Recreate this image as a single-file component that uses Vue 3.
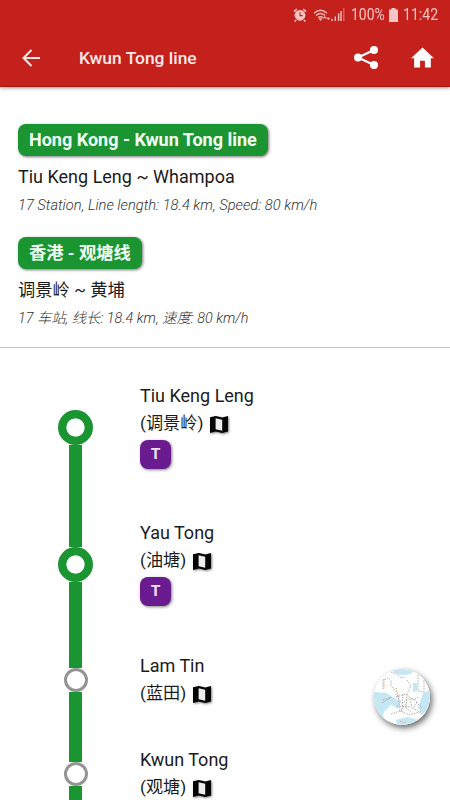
<template>
  <div class="screen">
    <header class="header">
      <div class="status">
        <svg class="alarm" viewBox="0 0 14 14">
          <circle cx="7" cy="7.3" r="5.4" fill="#f5c5c3" />
          <path d="M1 3.6 3.8 1.2M10.2 1.2 13 3.6M3 12l-1.3 1.5M11 12l1.3 1.5" stroke="#f5c5c3" stroke-width="1.6" />
          <path d="M7 4.2v3.4h2.7" fill="none" stroke="#c4211c" stroke-width="1.1" />
        </svg>
        <svg class="wifi" viewBox="0 0 18 14">
          <g fill="none" stroke="#f0b5b2" stroke-width="1.4">
            <path d="M1 5.2Q7.5-.8 14 5.2M3 7.6Q7.5 3.4 12 7.6M5 9.9q2.5-2.2 5 0" />
          </g>
          <path d="m5.5 10.8 2 2.2 2-2.2q-2-1.3-4 0z" fill="#f0b5b2" />
          <path d="m11.8 8 2 2.3H9.8zM15.3 12l2-2.3h-4z" fill="#f5c5c3" />
        </svg>
        <svg class="signal" viewBox="0 0 14 13">
          <path d="M1 11v2M4.3 8.5V13M7.6 5.5V13M10 3V13" stroke="#f5c5c3" stroke-width="1.4" />
          <path d="M12.8 0v13" stroke="#dc6b66" stroke-width="1.3" />
        </svg>
        <span class="percent">100%</span>
        <svg class="battery" viewBox="0 0 9 14">
          <path d="M2.5 0h4v1.6H9V14H0V1.6h2.5z" fill="#f5c5c3" />
        </svg>
        <span class="clock">11:42</span>
      </div>
      <div class="toolbar">
        <svg class="back" viewBox="0 0 18 18">
          <path d="M18 9H1.5M9.5 1 1.5 9l8 8" fill="none" stroke="#fbe9e8" stroke-width="2" />
        </svg>
        <h1>Kwun Tong line</h1>
        <svg class="share" viewBox="0 0 24 23">
          <path d="M20 4 4 11.5 20 19" fill="none" stroke="#fff" stroke-width="2.2" />
          <g fill="#fff">
            <circle cx="20" cy="4" r="4" />
            <circle cx="4" cy="11.5" r="4" />
            <circle cx="20" cy="19" r="4" />
          </g>
        </svg>
        <svg class="home" viewBox="0 0 24 21">
          <path d="M12 0 0 11.2h3.3V21h6.2v-7.2h5V21h6.2v-9.8H24z" fill="#fff" />
        </svg>
      </div>
    </header>

    <section class="summary">
      <div v-for="info in infos" :key="info.title" class="info" :class="info.lang">
        <div class="line-name">{{ info.title }}</div>
        <p class="route">{{ info.route }}</p>
        <p class="detail">{{ info.detail }}</p>
      </div>
    </section>

    <main class="stations">
      <div
        v-for="station in stations"
        :key="station.name"
        class="station"
        :class="{ transfer: station.transfer }"
      >
        <div class="track">
          <div class="segment before"></div>
          <div class="node"></div>
          <div class="segment after"></div>
        </div>
        <div class="label">
          <div class="name">{{ station.name }}</div>
          <div class="local">
            <span>({{ station.local }})</span>
            <svg class="map" viewBox="0 0 18 17">
              <path d="M0 1.2 5.8 0l6.4 1.4L18 0v15.6L12.2 17l-6.4-1.4L0 17z" fill="#050505" />
              <path d="m5.6 2.2 6.6 1.5v11L5.6 13.2z" fill="#ededed" />
            </svg>
          </div>
          <div v-if="station.transfer" class="badge">T</div>
        </div>
      </div>
    </main>

    <div class="map-button">
      <svg viewBox="0 0 56 56">
        <rect width="56" height="56" fill="#fdfefe" />
        <path d="M0 23 13 24l8 7-11 12-2 9H0zM18 2q10 7 20 2l3-6H18zM21 30l6 2-3 8-8-5zM49 24l7-3v18l-7 6-5-6zM22 51l11-3 12 3-6 5H23zM39 14l4 0 0 8-4 1z" fill="#c5e6f3" />
        <g fill="none" stroke="#a39a9b" stroke-width="0.8" stroke-dasharray="1.5 1.2">
          <path d="M17 3l6 2 4 4 4-1M9 20v-9l5-2 3 3v6M18 18l6 7 2 17M33 11l4 6-4 8M44 6v16l6 1V11M29 25l-1 17M33 25l-1 14 6 5M38 29l5 4-4 7 8 3M22 28l10-3 7 6 6-3M17 45l9-3 10 4 9-3 4 3M8 34l8-5M23 37l13 1M21 25l7 9 8-5 2 10M9 31l8-3 4 2M33 33l-8 11M42 33l6 6" />
        </g>
        <g fill="none" stroke="#df9b69" stroke-width="1" stroke-dasharray="1 1.4">
          <path d="M10 10v10M22 19l2 9M26 52l6 2" />
        </g>
      </svg>
    </div>
  </div>
</template>

<script setup>
const infos = [
  {
    lang: "en",
    title: "Hong Kong - Kwun Tong line",
    route: "Tiu Keng Leng ~ Whampoa",
    detail: "17 Station, Line length: 18.4 km, Speed: 80 km/h",
  },
  {
    lang: "zh",
    title: "香港 - 观塘线",
    route: "调景岭 ~ 黄埔",
    detail: "17 车站, 线长: 18.4 km, 速度: 80 km/h",
  },
];

const stations = [
  { name: "Tiu Keng Leng", local: "调景岭", transfer: true },
  { name: "Yau Tong", local: "油塘", transfer: true },
  { name: "Lam Tin", local: "蓝田" },
  { name: "Kwun Tong", local: "观塘" },
];
</script>

<style>
body {
  overflow: hidden;
}
</style>

<style scoped>
.screen {
  position: relative;
  display: flex;
  flex-direction: column;
  width: 450px;
  height: 800px;
  overflow: hidden;
  background: #fff;
  color: #1b1b1b;
  font-family: Roboto, "Noto Sans CJK SC", sans-serif;
}

svg {
  display: block;
  flex: none;
}

/* Header */
.header {
  flex: none;
  height: 87px;
  box-sizing: border-box;
  background: #c4211c;
  border-bottom: 1px solid #ab1410;
  box-shadow: 0 1px 4px rgba(0, 0, 0, 0.4);
}

.status {
  display: flex;
  align-items: center;
  justify-content: flex-end;
  height: 29px;
  padding-right: 12px;
  color: #f5c5c3;
  font-size: 16px;
}

.alarm {
  width: 14px;
  height: 14px;
  margin-right: 6px;
}

.wifi {
  width: 18px;
  height: 14px;
}

.signal {
  width: 14px;
  height: 13px;
  margin-right: 6px;
}

.percent {
  width: 34px;
  margin-right: 4px;
  transform: scaleX(0.87);
  transform-origin: left;
}

.battery {
  width: 9px;
  height: 14px;
  margin-right: 5px;
}

.clock {
  width: 35px;
  transform: scaleX(0.88);
  transform-origin: left;
}

.toolbar {
  display: flex;
  align-items: center;
  height: 57px;
  padding: 0 16px 0 22px;
}

.back {
  width: 18px;
  height: 18px;
}

h1 {
  flex: 1;
  margin: 0 0 0 39px;
  color: #fbe9e8;
  font-size: 17.4px;
  font-weight: 500;
}

.share {
  width: 24px;
  height: 23px;
  margin-right: 33px;
}

.home {
  width: 23px;
  height: 21px;
}

/* Line summary */
.summary {
  flex: none;
  height: 261px;
  box-sizing: border-box;
  padding: 37px 18px 0;
  border-bottom: 1px solid #c4c4c4;
}

.info {
  height: 113px;
}

.line-name {
  width: fit-content;
  height: 32px;
  padding: 0 11px;
  border-radius: 8px;
  background: #1b9432;
  box-shadow: 1px 1px 3px rgba(0, 0, 0, 0.55);
  color: #f2fff4;
  font-size: 18px;
  font-weight: 700;
  line-height: 32px;
  white-space: nowrap;
}

.route {
  margin: 8px 0 0;
  font-size: 18px;
  line-height: 26px;
}

.detail {
  margin: 4px 0 0;
  color: #333;
  font-size: 14.7px;
  font-style: italic;
  font-weight: 300;
  line-height: 23px;
}

.zh .line-name,
.zh .route {
  font-size: 17.3px;
}

.zh .detail {
  font-size: 14.35px;
}

/* Stations */
.stations {
  padding-top: 35px;
}

.station {
  display: flex;
  height: 94px;
}

.station.transfer {
  height: 133px;
}

.station.transfer:first-child {
  height: 137px;
}

.track {
  display: flex;
  flex-direction: column;
  align-items: center;
  width: 35px;
  margin-left: 58px;
}

.segment {
  width: 13px;
  background: #1b9432;
}

.before {
  height: 15px;
}

.transfer .before {
  height: 27px;
}

.station:first-child .before {
  background: transparent;
}

.after {
  flex: 1;
}

.node {
  width: 24px;
  height: 24px;
  box-sizing: border-box;
  border: 3px solid #949494;
  border-radius: 50%;
  background: #fff;
}

.transfer .node {
  width: 35px;
  height: 35px;
  border: 0;
  background: radial-gradient(circle, #fff 8.7px, #1b9432 9.5px);
}

.label {
  margin: -1px 0 0 47px;
  font-size: 18px;
}

.name,
.local {
  height: 27px;
  line-height: 27px;
  white-space: nowrap;
}

.local {
  display: flex;
  align-items: center;
  font-size: 17.2px;
}

.local span {
  padding-top: 1px;
}

.map {
  width: 18px;
  height: 17px;
  margin: 3px 0 0 7px;
  filter: drop-shadow(1px 1px 1px rgba(0, 0, 0, 0.5));
}

.badge {
  width: 31px;
  height: 29px;
  margin-top: 4px;
  border-radius: 8px;
  background: #6a1b8f;
  box-shadow: 1px 1px 3px rgba(0, 0, 0, 0.5);
  color: #f0e2f7;
  font-size: 15.5px;
  font-weight: 700;
  line-height: 28px;
  text-align: center;
}

/* Floating map shortcut */
.map-button {
  position: absolute;
  right: 20px;
  bottom: 75px;
  width: 56px;
  height: 56px;
  overflow: hidden;
  border-radius: 50%;
  box-shadow: 2px 3px 6px rgba(0, 0, 0, 0.6);
}
</style>
